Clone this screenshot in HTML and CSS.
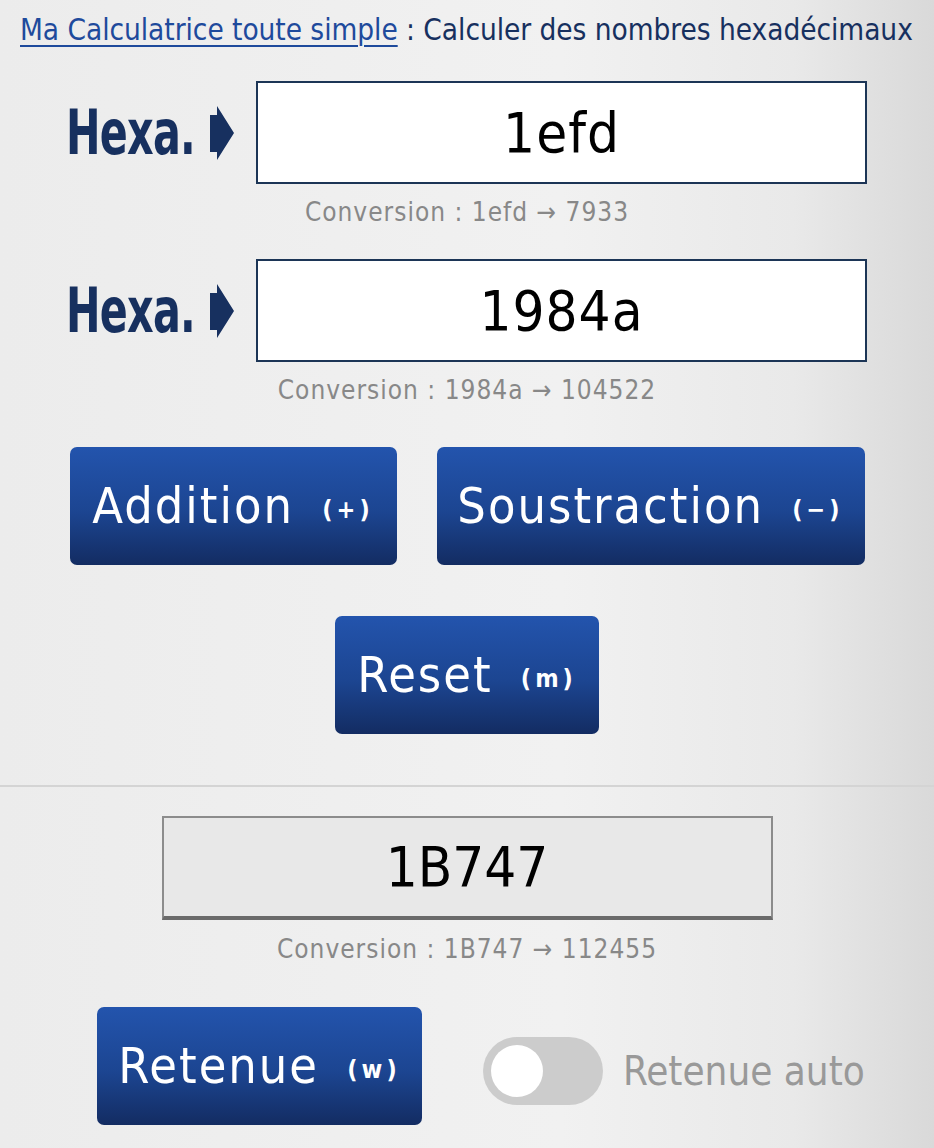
FILE: index.html
```html
<!DOCTYPE html>
<html lang="fr">
  <head>
    <meta charset="utf-8">
    <title>Calculer des nombres hexadécimaux</title>
    <link rel="stylesheet" href="styles.css">
  </head>
  <body>
    <h1 class="titre"><a href="#">Ma Calculatrice toute simple</a> : Calculer des nombres hexadécimaux</h1>

    <div class="champ premier">
      <span class="etiquette"><span class="etiquette-texte">Hexa.</span></span>
      <svg class="fleche" width="25" height="54" viewBox="0 0 25 54"><path d="M0 9 H7 V0 L24 27 L7 54 V46 H0 Z" fill="#17305f"/></svg>
      <input class="saisie" type="text" value="1efd">
    </div>
    <p class="conversion">Conversion : 1efd → 7933</p>

    <div class="champ">
      <span class="etiquette"><span class="etiquette-texte">Hexa.</span></span>
      <svg class="fleche" width="25" height="54" viewBox="0 0 25 54"><path d="M0 9 H7 V0 L24 27 L7 54 V46 H0 Z" fill="#17305f"/></svg>
      <input class="saisie" type="text" value="1984a">
    </div>
    <p class="conversion">Conversion : 1984a → 104522</p>

    <div class="operations">
      <button class="bouton addition">Addition <small>(+)</small></button>
      <button class="bouton soustraction">Soustraction <small>(−)</small></button>
    </div>
    <div class="operations reset">
      <button class="bouton raz">Reset <small>(m)</small></button>
    </div>

    <hr class="separateur">

    <div class="resultat">1B747</div>
    <p class="conversion bas">Conversion : 1B747 → 112455</p>

    <div class="retenue">
      <button class="bouton btn-retenue">Retenue <small>(w)</small></button>
      <span class="interrupteur"><span class="bouton-rond"></span></span>
      <span class="auto">Retenue auto</span>
    </div>
  </body>
</html>
```

FILE: styles.css
```css
html, body {
  margin: 0;
  padding: 0;
}
body {
  font-family: "DejaVu Sans Condensed", "DejaVu Sans", sans-serif;
  background: linear-gradient(to right, #ececec 0%, #f1f1f1 60%, #e9e9e9 85%, #d9d9d9 100%);
  min-height: 1148px;
  color: #17305f;
}

.titre {
  margin: 0;
  padding: 10px 0 0 20px;
  font-size: 29.5px;
  line-height: 40px;
  font-weight: normal;
  color: #17305f;
  white-space: nowrap;
  letter-spacing: -0.05px;
}
.titre a {
  color: #1e4a9c;
  text-decoration: underline;
  text-underline-offset: 5px;
  text-decoration-thickness: 2px;
}

.champ {
  display: flex;
  align-items: center;
  margin-left: 66px;
}
.champ.premier { margin-top: 31px; }
.etiquette {
  width: 144px;
  flex: none;
}
.etiquette-texte {
  display: inline-block;
  font-size: 62px;
  font-weight: bold;
  letter-spacing: -1px;
  transform: scaleX(0.74);
  transform-origin: left center;
}
.fleche { margin-right: 21px; flex: none; }
.saisie {
  box-sizing: border-box;
  width: 611px;
  height: 103px;
  border: 2px solid #1c3556;
  background: #fff;
  text-align: center;
  font-family: inherit;
  font-size: 56px;
  letter-spacing: 1px;
  color: #000;
  padding: 0;
  outline: none;
}

.conversion {
  margin: 13px 0 32px;
  text-align: center;
  font-size: 26px;
  line-height: 30px;
  color: #888;
  letter-spacing: 1px;
}
.conversion.bas { margin-top: 14px; }

.operations {
  display: flex;
  justify-content: center;
  gap: 40px;
  margin-top: 42px;
}
.operations.reset { margin-top: 51px; }
.bouton {
  box-sizing: border-box;
  height: 118px;
  border: none;
  border-radius: 7px;
  background: linear-gradient(to bottom, #2354ad 0%, #1c4591 55%, #132c62 100%);
  color: #fff;
  font-family: inherit;
  font-size: 50px;
  letter-spacing: 2px;
  padding: 0;
}
.bouton small {
  font-size: 25px;
  font-weight: bold;
  letter-spacing: 4px;
  margin-left: 12px;
  vertical-align: 5px;
}
.addition { width: 327px; }
.soustraction { width: 428px; }
.raz { width: 264px; }

.separateur {
  border: none;
  border-top: 2px solid #d4d4d4;
  margin: 51px 0 0;
}

.resultat {
  box-sizing: border-box;
  width: 611px;
  height: 104px;
  margin: 29px auto 0;
  border: 2px solid #8c8c8c;
  border-bottom: 4px solid #6a6a6a;
  background: #e8e8e8;
  color: #000;
  font-size: 56px;
  text-align: center;
  line-height: 98px;
}

.retenue {
  display: flex;
  align-items: center;
  margin-left: 97px;
  margin-top: 43px;
}
.btn-retenue { width: 325px; }
.interrupteur {
  box-sizing: border-box;
  width: 120px;
  height: 68px;
  margin: 10px 0 0 61px;
  border-radius: 34px;
  background: #cccccc;
  padding: 8px 0 0 8px;
}
.bouton-rond {
  display: block;
  width: 52px;
  height: 52px;
  border-radius: 50%;
  background: #fff;
}
.auto {
  margin: 10px 0 0 20px;
  font-size: 40px;
  color: #999;
}
```
